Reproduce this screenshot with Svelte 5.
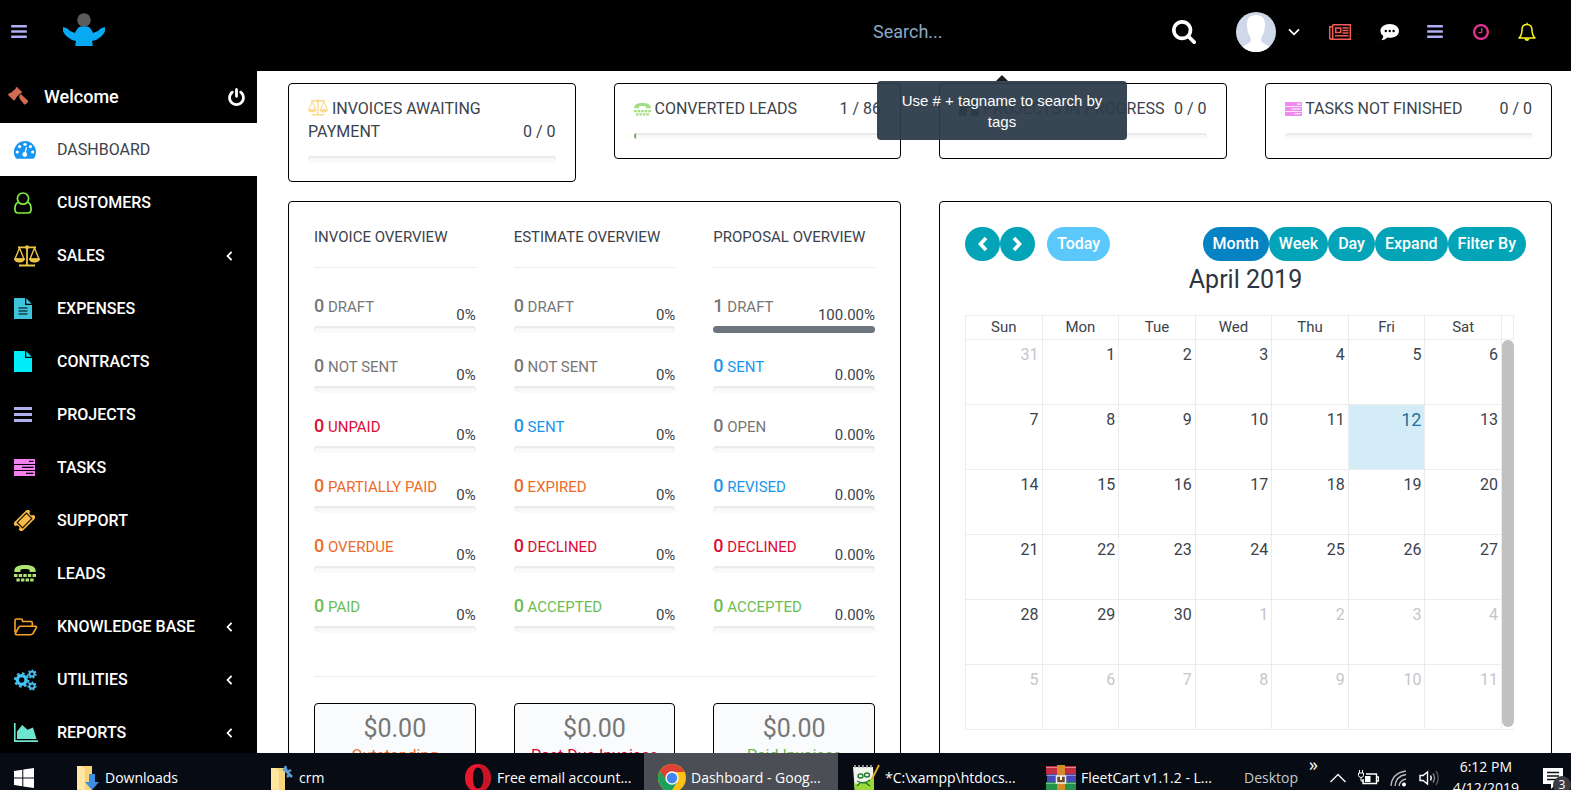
<script>
  const icons = {
    bars: { w: 18, h: 15, d: '<path d="M0 0h18v3H0zM0 6h18v3H0zM0 12h18v3H0z" fill="currentColor"/>' },
    gavel: { w: 20, h: 20, d: '<g fill="currentColor"><path d="M7.600.6 9 0l5 5-.6 1.400-.9-.2-4.800 4.800.3 1-1.400.7-5.600-5.600.7-1.400.9.2L7.800 1.600z"/><path d="m0 7 1.400-.4L7 12.200l-.4 1.400L5.200 13 .6 8.400z"/><path d="m11 9 2-2 1.600 1.700 5 4.600q1 1.200 0 2.200l-1.600 1.600q-1.200 1-2.200-.1l-4-5z"/></g>' },
    power: { w: 17, h: 18, vb: '128 0 1536 1664', d: '<path fill="currentColor" d="M1664 896q0 156-61 298t-164 245-245 164-298 61-298-61-245-164-164-245-61-298q0-182 80.500-343t226.500-270q43-32 95.500-25t83.500 50q32 42 24.500 94.500t-49.500 84.500q-98 74-151.500 181t-53.500 228q0 104 40.500 198.500t109.500 163.500 163.500 109.500 198.500 40.500 198.500-40.500 163.500-109.500 109.500-163.500 40.500-198.500q0-121-53.500-228t-151.500-181q-42-32-49.500-84.500t24.500-94.500q31-43 84-50t95 25q146 109 226.500 270t80.500 343zm-640-768v640q0 52-38 90t-90 38-90-38-38-90v-640q0-52 38-90t90-38 90 38 38 90z"/>' },
    search: { w: 24, h: 24, vb: '64 128 1664 1664', d: '<path fill="currentColor" d="M1216 832q0-185-131.500-316.500t-316.500-131.500-316.500 131.500-131.500 316.500 131.500 316.500 316.500 131.500 316.500-131.500 131.500-316.500zm512 832q0 52-38 90t-90 38q-54 0-90-38l-343-342q-179 124-399 124-143 0-273.500-55.500t-225-150-150-225-55.500-273.500 55.500-273.500 150-225 225-150 273.500-55.500 273.500 55.500 225 150 150 225 55.500 273.500q0 220-124 399l343 343q37 37 37 90z"/>' },
    clock: { w: 16, h: 16, vb: '128 128 1536 1536', d: '<path fill="currentColor" d="M1024 544v448q0 14-9 23t-23 9h-320q-14 0-23-9t-9-23v-64q0-14 9-23t23-9h224v-352q0-14 9-23t23-9h64q14 0 23 9t9 23zm416 352q0-148-73-273t-198-198-273-73-273 73-198 198-73 273 73 273 198 198 273 73 273-73 198-198 73-273zm224 0q0 209-103 385.500t-279.500 279.500-385.500 103-385.500-103-279.500-279.500-103-385.500 103-385.500 279.500-279.500 385.500-103 385.500 103 279.500 279.500 103 385.500z"/>' },
    dashboard: { w: 22, h: 18, d: '<path fill="currentColor" d="M11 0a11 11 0 0 1 11 11c0 2.300-.6 4.200-1.700 6q-.4.700-1.200.7H2.900q-.8 0-1.200-.7A11 11 0 0 1 11 0z"/><g fill="#fff"><circle cx="3.300" cy="11" r="1.600"/><circle cx="5.600" cy="5.600" r="1.600"/><circle cx="11" cy="3.300" r="1.600"/><circle cx="16.400" cy="5.600" r="1.600"/><circle cx="18.700" cy="11" r="1.600"/><path d="m12 6 1.200.3-1.300 5a2.400 2.400 0 1 1-1.300-.3z"/></g>' },
    user: { w: 18, h: 22, d: '<g fill="none" stroke="currentColor" stroke-width="1.700"><circle cx="9" cy="6.600" r="5.600"/><path d="M4.400 10.300C2 11 .9 13.400.9 17c0 2.300 1.200 4 3.300 4h9.600c2.100 0 3.300-1.700 3.300-4 0-3.600-1.100-6-3.500-6.700"/></g>' },
    scale: { w: 26, h: 22, d: '<g fill="none" stroke="currentColor"><path d="M4 2.300h18M13 2v18M5 20.500h16" stroke-width="1.800"/><path d="M5.500 3 1 14h9zM20.500 3 16 14h9z" stroke-width="1.400"/></g><g fill="currentColor"><path d="M0 13.500h11c0 2.500-2.500 4-5.500 4S0 16 0 13.500zM15 13.500h11c0 2.500-2.500 4-5.500 4s-5.500-1.500-5.500-4z"/><circle cx="13" cy="2.300" r="2"/></g>' },
    filetext: { w: 18, h: 21, d: '<path fill="currentColor" d="M0 0h11v7h7v14H0zM12.300.3 17.700 5.700h-5.400z"/><path d="M4.500 10h9M4.500 13h9M4.500 16h9" stroke="#000" stroke-width="1.200"/>' },
    file: { w: 18, h: 21, d: '<path fill="currentColor" d="M0 0h11v7h7v14H0zM12.300.3 17.700 5.700h-5.400z"/>' },
    tasks: { w: 21, h: 17, d: '<path fill="currentColor" fill-rule="evenodd" d="M0 0h21v5H0zM15 1.800v1.300h4.500V1.800zM0 6h21v5H0zM8 7.800v1.300h11.500V7.800zM0 12h21v5H0zM12 13.800v1.300h7.500v-1.300z"/>' },
    ticket: { w: 21, h: 21, d: '<g transform="rotate(-45 10.500 10.500)"><path fill="currentColor" d="M0 4.500h21v3.700a2.300 2.300 0 0 0 0 4.600v3.700H0v-3.700a2.300 2.300 0 0 0 0-4.600z"/><path d="M4 6.700h13v7.600H4z" fill="none" stroke="#241804" stroke-width="1.200"/></g>' },
    tty: { w: 22, h: 17, d: '<g fill="currentColor"><path d="M11 0c6 0 10.600 1.600 10.600 5.300V7h-6V5.200C15.600 4.400 13.600 4 11 4s-4.600.4-4.600 1.200V7h-6V5.300C.4 1.600 5 0 11 0z"/><path d="M0 9h3.500v3H0zM4.700 9h3.400v3H4.700zM9.300 9h3.400v3H9.300zM13.900 9h3.400v3h-3.400zM18.500 9H22v3h-3.500zM2.400 13.500h3.400v3H2.400zM7 13.500h3.400v3H7zM11.600 13.500H15v3h-3.400zM16.200 13.500h3.400v3h-3.400z"/></g>' },
    folder: { w: 24, h: 18, d: '<path fill="none" stroke="currentColor" stroke-width="1.600" stroke-linejoin="round" d="M1 14.500V2.500Q1 1 2.500 1H7q1.500 0 1.500 1.500v1H17q1.300 0 1.300 1.500v3.200M6.500 8.200h15q1.600 0 .8 1.400L19 15.500Q18 16.700 16.500 16.700h-14q-1.600 0-1-1.300l3-5.800q.9-1.400 2-1.400z"/>' },
    cogs: { w: 23, h: 22, d: '<g fill="none" stroke="currentColor"><circle cx="7.700" cy="11" r="4.400" stroke-width="3.400"/><circle cx="7.700" cy="11" r="6.700" stroke-width="2" stroke-dasharray="2.700 2.562"/><circle cx="18" cy="5" r="2.500" stroke-width="1.800"/><circle cx="18" cy="5" r="3.900" stroke-width="1.400" stroke-dasharray="1.700 1.800"/><circle cx="18" cy="17" r="2.500" stroke-width="1.800"/><circle cx="18" cy="17" r="3.900" stroke-width="1.400" stroke-dasharray="1.700 1.800"/></g>' },
    chart: { w: 24, h: 19, d: '<path fill="currentColor" d="M0 0h1.600v17.300H24V19H0zM3 16V8.500L8.200 2l5.300 4.700L19 4.400 22.500 16z"/>' },
    left: { w: 7, h: 10, d: '<path d="M5.600.8 1.600 5l4 4.200" fill="none" stroke="currentColor" stroke-width="1.800"/>' },
    down: { w: 12, h: 8, d: '<path d="m1 1.300 5 5 5-5" fill="none" stroke="currentColor" stroke-width="1.700"/>' },
    news: { w: 22, h: 16, d: '<g fill="none" stroke="currentColor" stroke-width="1.500"><path d="M3.700.7h17.600v14.600H2.500Q.7 15.300.7 13.500V2.700h3M3.700.7v12.800q0 1.800-1.200 1.800M6.700 4h5v4.500h-5zM13.500 4h6M13.500 6.500h6M13.500 9h6M6 11.700h13.500"/></g>' },
    comment: { w: 19, h: 18, d: '<path fill="currentColor" d="M9.700 1C15 1 19 4 19 7.900s-4 6.900-9.300 6.900q-1.200 0-2.200-.2Q5 17 1.300 17.300q2-1.700 2-4.200Q.4 11 .4 7.900C.4 4 4.500 1 9.700 1z"/><g fill="#000"><circle cx="5.800" cy="8" r="1.200"/><circle cx="9.700" cy="8" r="1.200"/><circle cx="13.600" cy="8" r="1.200"/></g>' },
    bell: { w: 18, h: 20, d: '<path fill="none" stroke="currentColor" stroke-width="1.500" stroke-linejoin="round" d="M9 2.500c-3.300 0-5 2.400-5 5.300 0 4.200-1 6.400-3 8.200h16c-2-1.800-3-4-3-8.200 0-2.900-1.700-5.300-5-5.300zM9 2.500V.8"/><path fill="currentColor" d="M6.500 16.500h5a2.500 2.500 0 0 1-5 0z"/>' },
    binoc: { w: 20, h: 16, d: '<path fill="currentColor" d="M4 0h4v3h4V0h4l4 10v6h-8V8H8v8H0v-6z"/>' },
    cleft: { w: 11, h: 16, d: '<path d="M9 2 3.500 8 9 14" fill="none" stroke="currentColor" stroke-width="3.600"/>' },
    cright: { w: 11, h: 16, d: '<path d="M2 2 7.500 8 2 14" fill="none" stroke="currentColor" stroke-width="3.600"/>' },
    logo: { w: 42, h: 33, d: '<circle cx="21" cy="7" r="6.800" fill="#5c5c5c"/><path fill="#06a9f2" d="M0 14q5 1 7 4l5 2q2-5 5-6.500h8q3 1.500 5 6.500l5-2q2-3 7-4v4q-2 5-6 7-3 3-7 3l1 6q-9 2-18 0l1-6q-4 0-7-3-4-2-6-7z"/>' },
    windows: { w: 20, h: 20, d: '<path fill="#fff" d="M0 3 8.300 1.800v7.700H0zM9.300 1.600 20 0v9.500H9.300zM0 10.500h8.300v7.700L0 17zM9.300 10.500H20V20L9.300 18.400z"/>' },
    downloads: { w: 24, h: 26, d: '<path fill="#f5d47c" d="M1 1h15v25H1z"/><path fill="#ffe7a0" d="M1 1h4l4 3v22l-3-1-5-1z"/><path fill="#3b8ee0" d="M13 9h6v8h4l-7 8-7-8h4z"/>' },
    crm: { w: 24, h: 26, d: '<path fill="#f5d47c" d="M1 3h14v23H1z"/><path fill="#ffe7a0" d="M1 3h4l4 3v20l-3-1-5-1z"/><path d="m13 4 4 3 4-2M15 1l2 6 5 5M20 9l-3 3" stroke="#5b9fd2" stroke-width="2.500" fill="none"/>' },
    opera: { w: 28, h: 28, d: '<path fill="#e8182c" fill-rule="evenodd" d="M14 0c8 0 13 6 13 14s-5 14-13 14S1 22 1 14 6 0 14 0zM14 3.500C10.500 3.500 9 8.500 9 14s1.500 10.500 5 10.500S19.500 19.500 19.500 14 17.500 3.500 14 3.500z"/><path d="M16 .2c7 .8 11 6.800 11 13.800s-4 13-11 13.800v-4q3.500-3 3.500-9.800T16 4.200z" fill="#a80f20" opacity=".5"/>' },
    chrome: { w: 28, h: 28, d: '<circle cx="14" cy="14" r="14" fill="#fbc116"/><path fill="#de4035" d="M1.900 7A14 14 0 0 1 26.100 7L27 8H14L8 17z"/><path fill="#1da05d" d="M1.900 7A14 14 0 0 0 13 28l6-10-10-1z"/><circle cx="14" cy="14" r="6.700" fill="#f4f4f4"/><circle cx="14" cy="14" r="5.200" fill="#4285ee"/>' },
    notepad: { w: 28, h: 28, d: '<path fill="#f1f5ee" d="M1 3h20l1 25H3z"/><path fill="#9ad83a" d="M2 19q10 3 20-7v16H3z"/><path d="M3 4V1M7 4V1M11 4V1M15 4V1M19 4V1" stroke="#bbb" stroke-width="1.500"/><g stroke="#247a28" stroke-width="1.400" fill="none"><ellipse cx="8.500" cy="12" rx="2.500" ry="2"/><ellipse cx="15" cy="11" rx="2.500" ry="2"/><path d="M5 17q7 4 13-1M8 19l-3 3M14 19l4 3"/></g><path d="m20 15 7-14" stroke="#dba62a" stroke-width="2"/>' },
    winrar: { w: 30, h: 28, d: '<path fill="#c22d40" d="M0 2h30v8H0z"/><path fill="#4649b8" d="M1 10h29v8H1z"/><path fill="#23924a" d="M0 18h30v8H0z"/><path d="M0 3.500h30M0 11.500h30M0 19.500h30" stroke="#fff" stroke-opacity=".4"/><path fill="#d68a2a" d="M11 1h8v26h-8z"/><path d="M10.500 12h9v7h-9z" fill="#6b4a24" stroke="#eee" stroke-width="1.500"/><path d="M15 12v4" stroke="#fff" stroke-width="2"/>' },
    up: { w: 18, h: 10, d: '<path d="m1.500 9 7.500-7.500L16.500 9" fill="none" stroke="#eee" stroke-width="1.500"/>' },
    battery: { w: 21, h: 16, d: '<path d="M8 4h10.500v9.500H5V9M19 7h1.500v4H19" fill="none" stroke="#fff" stroke-width="1.400"/><path fill="#fff" d="M7 6h5.500v6H7z"/><path d="M1.500 0v3M4.500 0v3M.5 3h5v2.500q-.5 2-2.500 2t-2.500-2zM3 8v3h3" stroke="#fff" fill="none"/>' },
    wifi: { w: 18, h: 17, d: '<g fill="none" stroke="#bbb" stroke-width="1.400"><path d="M1 16Q2 3 16 1"/><path d="M5 16q1-10 11-11.500" /><path d="M9 16q1-6 7-7"/></g><circle cx="14" cy="14.500" r="2" fill="#fff"/>' },
    sound: { w: 21, h: 16, d: '<path d="M1 5.500h3L8.500 2v12L4 10.500H1z" fill="none" stroke="#fff" stroke-width="1.400"/><g fill="none" stroke-width="1.400"><path d="M11.500 5.500q1.600 2.500 0 5" stroke="#fff"/><path d="M14 3.500q3 4.500 0 9" stroke="#888"/><path d="M17 1q4.500 7 0 14" stroke="#555"/></g>' },
    note: { w: 28, h: 28, d: '<path fill="#fff" d="M0 1h20v16h-7l-5 5v-5H0z"/><path d="M4 5.500h12M4 9h12M4 12.500h12" stroke="#0a0e16" stroke-width="1.400"/>' }
  };

  const menu = [
    ['DASHBOARD', 'dashboard', '#1996f3'],
    ['CUSTOMERS', 'user', '#7fef3c'],
    ['SALES', 'scale', '#edc546', true],
    ['EXPENSES', 'filetext', '#3fc3dd'],
    ['CONTRACTS', 'file', '#00ecf8'],
    ['PROJECTS', 'bars', '#b0aff2'],
    ['TASKS', 'tasks', '#f47ff0'],
    ['SUPPORT', 'ticket', '#f9bb48'],
    ['LEADS', 'tty', '#ade573'],
    ['KNOWLEDGE BASE', 'folder', '#f8a527', true],
    ['UTILITIES', 'cogs', '#46c3f5', true],
    ['REPORTS', 'chart', '#6de5cf', true]
  ];

  const tools = [
    ['News feed', 'news', '#f55b52'],
    ['Messages', 'comment', '#ffffff'],
    ['To do', 'bars', '#b0aff2'],
    ['Timers', 'clock', '#e1328e'],
    ['Notifications', 'bell', '#fdf51e']
  ];

  const cards = [
    ['INVOICES AWAITING PAYMENT', '0 / 0', 'scale', '#fbd98c', 0],
    ['CONVERTED LEADS', '1 / 86', 'tty', '#a5dd84', 1],
    ['PROJECTS IN PROGRESS', '0 / 0', 'binoc', '#333333', 0],
    ['TASKS NOT FINISHED', '0 / 0', 'tasks', '#ef8af0', 0]
  ];

  const grey = '#777777', blue = '#2196e8', red = '#dc0b38', orange = '#ee6a2a', green = '#6cbd54';
  const overviews = [
    { title: 'INVOICE OVERVIEW', pct: '0%', rows: [['DRAFT', grey], ['NOT SENT', grey], ['UNPAID', red], ['PARTIALLY PAID', orange], ['OVERDUE', orange], ['PAID', green]] },
    { title: 'ESTIMATE OVERVIEW', pct: '0%', rows: [['DRAFT', grey], ['NOT SENT', grey], ['SENT', blue], ['EXPIRED', orange], ['DECLINED', red], ['ACCEPTED', green]] },
    { title: 'PROPOSAL OVERVIEW', pct: '0.00%', rows: [['DRAFT', grey, 1], ['SENT', blue], ['OPEN', grey], ['REVISED', blue], ['DECLINED', red], ['ACCEPTED', green]] }
  ];
  const totals = [['Outstanding Invoices', orange], ['Past Due Invoices', red], ['Paid Invoices', green]];

  const days = ['Sun', 'Mon', 'Tue', 'Wed', 'Thu', 'Fri', 'Sat'];
  const weeks = Array.from({ length: 6 }, (_, w) =>
    Array.from({ length: 7 }, (_, d) => {
      const n = w * 7 + d;
      return { n: n === 0 ? 31 : n > 30 ? n - 30 : n, off: n === 0 || n > 30, today: n === 12 };
    })
  );

  const apps = [
    ['Downloads', 'downloads'],
    ['crm', 'crm'],
    ['Free email account...', 'opera'],
    ['Dashboard - Goog...', 'chrome', true],
    ['*C:\\xampp\\htdocs...', 'notepad'],
    ['FleetCart v1.1.2 - L...', 'winrar']
  ];
</script>

{#snippet icon(name, w = 0)}
  {@const i = icons[name]}
  <svg width={w || i.w} height={w ? Math.round((w * i.h) / i.w) : i.h} viewBox={i.vb ?? `0 0 ${i.w} ${i.h}`} aria-hidden="true">{@html i.d}</svg>
{/snippet}

<div class="screen">
  <div class="app">
    <header>
      <button class="burger" aria-label="Toggle menu">{@render icon('bars', 16)}</button>
      <a class="logo" href="#home" aria-label="Home">{@render icon('logo')}</a>
      <div class="search">
        <input type="search" placeholder="Search..." aria-label="Search" aria-describedby="search-tip" />
        <div class="tip" id="search-tip" role="tooltip">Use # + tagname to search by tags</div>
      </div>
      <button class="find" aria-label="Search">{@render icon('search')}</button>
      <div class="avatar">
        <svg width="40" height="40" viewBox="0 0 40 40" aria-hidden="true">
          <path fill="#fff" d="M20 3c7 0 9.500 4.500 9 11-.3 5-1.600 9-3.600 11.500v4c2 2.500 5.500 3 8 5.500v6H6.600v-6c2.500-2.500 6-3 8-5.500v-4c-2-2.500-3.300-6.500-3.600-11.500C10.500 7.500 13 3 20 3z" />
        </svg>
      </div>
      <button class="account" aria-label="Account">{@render icon('down')}</button>
      <nav class="tools" aria-label="Tools">
        {#each tools as [label, name, color]}
          <button aria-label={label} style:color>{@render icon(name, name === 'bars' ? 16 : 0)}</button>
        {/each}
      </nav>
    </header>

    <div class="body">
      <aside>
        <div class="welcome">
          <span class="gavel">{@render icon('gavel')}</span>
          <strong>Welcome</strong>
          <button aria-label="Log out">{@render icon('power')}</button>
        </div>
        <nav aria-label="Main">
          {#each menu as [label, name, color, sub], i}
            <a href="#{name}" class:active={i === 0}>
              <span class="mi" style:color>{@render icon(name)}</span>
              <span>{label}</span>
              {#if sub}<span class="sub">{@render icon('left')}</span>{/if}
            </a>
          {/each}
        </nav>
      </aside>

      <main>
        {#each cards as [label, value, name, color, pct]}
          <section class="card">
            <div class="cardhead">
              <span><span class="ci" style:color>{@render icon(name, name === 'scale' || name === 'binoc' ? 20 : 17)}</span> {label}</span>
              <span class="val">{value}</span>
            </div>
            <div class="bar thin"><div class="fill lead" style:width="{pct}%"></div></div>
          </section>
        {/each}

        <section class="panel">
          <div class="cols">
            {#each overviews as o}
              <div>
                <h2>{o.title}</h2>
                {#each o.rows as [label, color, full]}
                  <div class="stat">
                    <a href="#stat" style:color><b>{full ? 1 : 0}</b> {label}</a>
                    <span>{full ? '100.00%' : o.pct}</span>
                  </div>
                  <div class="bar"><div class="fill" style:width="{full ? 100 : 0}%"></div></div>
                {/each}
              </div>
            {/each}
          </div>
          <div class="cols totals">
            {#each totals as [label, color]}
              <div class="total"><p>$0.00</p><span style:color>{label}</span></div>
            {/each}
          </div>
        </section>

        <section class="panel">
          <div class="toolbar">
            <button class="round" aria-label="Previous">{@render icon('cleft')}</button>
            <button class="round" aria-label="Next">{@render icon('cright')}</button>
            <button class="today">Today</button>
            <span class="push"></span>
            <button class="on">Month</button>
            <button>Week</button>
            <button>Day</button>
            <button>Expand</button>
            <button>Filter By</button>
          </div>
          <h1>April 2019</h1>
          <table>
            <thead>
              <tr>
                {#each days as d}<th scope="col">{d}</th>{/each}
                <td class="gutter"></td>
              </tr>
            </thead>
            <tbody>
              {#each weeks as week, w}
                <tr>
                  {#each week as d}
                    <td class:off={d.off} class:now={d.today}>{d.n}</td>
                  {/each}
                  {#if w === 0}<td class="gutter track" rowspan="6"><div class="thumb"></div></td>{/if}
                </tr>
              {/each}
            </tbody>
          </table>
        </section>
      </main>
    </div>
  </div>

  <footer>
    <button class="start" aria-label="Start">{@render icon('windows')}</button>
    <div class="apps">
      {#each apps as [label, name, on]}
        <button class:on>{@render icon(name)}<span>{label}</span></button>
      {/each}
    </div>
    <div class="tray">
      <span class="desk">Desktop</span>
      <span class="more">»</span>
      {@render icon('up')}
      {@render icon('battery')}
      {@render icon('wifi')}
      {@render icon('sound')}
    </div>
    <div class="clock"><span>6:12 PM</span><span>4/12/2019</span></div>
    <div class="note">{@render icon('note')}<span>3</span></div>
  </footer>
</div>

<style>
  :global(body) { background: #fff; overflow: hidden; }
  * { box-sizing: border-box; }
  button { border: 0; padding: 0; background: none; color: inherit; font: inherit; cursor: pointer; }
  a { color: inherit; text-decoration: none; }
  svg { display: block; flex: none; }
  .screen { height: 100vh; display: flex; flex-direction: column; font: 16px/24px Roboto, sans-serif; color: #3b424c; }
  .app { flex: 1; min-height: 0; overflow: hidden; display: flex; flex-direction: column; }

  header { flex: none; height: 71px; padding: 0 21px 8px 11px; background: #000; display: flex; align-items: center; color: #fff; }
  .burger { color: #b0aff2; }
  .logo { margin-left: 36px; margin-top: -4px; }
  .search { position: relative; width: 324px; margin-left: auto; }
  .search input { width: 100%; height: 40px; border: 0; outline: 0; background: none; padding: 0 0 0 33px; font: 18px Roboto, sans-serif; color: #fff; }
  .search input::placeholder { color: #8aa9c4; opacity: 1; }
  .tip { position: absolute; z-index: 5; left: 37px; right: 37px; top: 69px; padding: 9px 16px 8px; border-radius: 4px; background: rgba(44, 60, 73, 0.95); color: #fff; font: 15px/21px "Liberation Sans", Arial, sans-serif; text-align: center; }
  .tip::before { content: ""; position: absolute; left: 50%; top: -6px; margin-left: -6px; border: 6px solid transparent; border-top: 0; border-bottom: 6px solid #1b1f24; }
  .find { width: 40px; height: 40px; display: grid; place-items: center; }
  .avatar { width: 40px; height: 40px; margin-left: 32px; border-radius: 50%; overflow: hidden; background: #cfd8e8; }
  .account { width: 24px; height: 40px; margin: 0 12px 0 6px; display: grid; place-items: center; }
  .tools { display: flex; }
  .tools button { width: 46px; height: 40px; display: grid; place-items: center; }
  .tools button:first-child { width: 48px; padding-right: 4px; }

  .body { flex: 1; min-height: 0; display: flex; }
  aside { flex: none; width: 257px; background: #000; color: #fff; }
  .welcome { height: 52px; display: flex; align-items: center; padding: 0 12px 0 8px; }
  .gavel { width: 36px; color: #d06b52; }
  .welcome strong { flex: 1; font-size: 18px; font-weight: 500; }
  aside nav a { display: flex; align-items: center; height: 53px; padding: 0 24px 0 14px; }
  aside nav a.active { background: #fff; color: #3b424c; }
  aside nav a:not(.active) { font-weight: 500; }
  .mi { width: 43px; }
  .sub { margin-left: auto; }

  main { flex: 1; min-width: 0; display: grid; grid-template-columns: repeat(4, minmax(0, 1fr)); grid-auto-rows: max-content; gap: 19px 38px; padding: 12px 19px 0 31px; }
  .card { align-self: start; padding: 13px 19px 19px; border: 1px solid #000; border-radius: 4px; }
  .cardhead { display: flex; justify-content: space-between; align-items: flex-end; line-height: 23px; gap: 4px; }
  .ci { display: inline-block; vertical-align: -2px; }
  .val { white-space: nowrap; }
  .bar { height: 7px; margin-bottom: 20px; border-radius: 4px; background: #f9f9fa; box-shadow: inset 0 2px 1px #e9e9eb; overflow: hidden; }
  .thin { height: 6px; margin: 13px 0 0; }
  .fill { height: 100%; background: #6d757f; }
  .lead { min-width: 0; background: #6cb04a; }

  .panel { grid-column: span 2; padding: 25px; border: 1px solid #000; border-radius: 4px; }
  .cols { display: grid; grid-template-columns: repeat(3, minmax(0, 1fr)); gap: 38px; }
  h2 { margin: 0 0 25px; padding-bottom: 20px; border-bottom: 1px solid #ececee; font-size: 15px; line-height: 20px; font-weight: 400; white-space: nowrap; }
  .stat { display: flex; justify-content: space-between; height: 33px; white-space: nowrap; font-size: 15px; }
  .stat a { line-height: 26px; }
  .stat b { font-size: 18px; font-weight: 500; }
  .stat span { align-self: flex-end; line-height: 22px; }
  .totals { margin-top: 23px; padding-top: 26px; border-top: 1px solid #ececee; }
  .total { padding: 10px; border: 1px solid #000; border-radius: 4px; background: #fafbfd; text-align: center; }
  .total p { margin: 0; font-size: 25px; line-height: 30px; color: #777; }

  .toolbar { display: flex; height: 34px; }
  .toolbar button { padding: 0 10px; border-radius: 17px; background: #03a4b8; color: #fff; font-weight: 500; }
  .toolbar .round { width: 35px; padding: 0; display: grid; place-items: center; }
  .toolbar .today { margin-left: 12px; background: #5bc8fb; }
  .toolbar .on { background: #0683c3; }
  .push { flex: 1; }
  h1 { margin: 0 0 17px; font-size: 25px; line-height: 37px; font-weight: 400; text-align: center; color: #2d353f; }
  table { width: calc(100% - 12px); table-layout: fixed; border-collapse: collapse; }
  th, td { border: 1px solid #ececee; padding: 0; }
  th { height: 24px; font-weight: 400; font-size: 15px; line-height: 23px; }
  td { height: 65px; padding: 4px 3px 0 0; text-align: right; vertical-align: top; line-height: 22px; }
  td.off { color: #c4c6c9; }
  td.now { background: #d4ecf7; color: #1f7396; font-size: 18px; }
  td.gutter { width: 12px; height: 24px; padding: 0; }
  td.track { border-width: 0 0 1px; }
  .thumb { height: 387px; border-radius: 6px; background: #c1c1c1; }

  footer { flex: none; height: 37px; overflow: hidden; display: flex; align-items: flex-start; background: #070b13; color: #fff; font: 14px/20px "Open Sans", "Segoe UI", sans-serif; }
  footer button, .tray { height: 50px; display: flex; align-items: center; }
  .start { width: 62px; padding-left: 14px; }
  .apps { flex: 0 1 1164px; display: grid; grid-template-columns: repeat(6, minmax(0, 1fr)); }
  .apps button { padding-left: 14px; gap: 5px; white-space: nowrap; }
  .apps .on { background: #4b4e54; }
  .tray { gap: 11px; padding-left: 18px; white-space: nowrap; }
  .desk { color: #c8cacc; }
  .more { align-self: flex-start; font-size: 18px; line-height: 22px; }
  .clock { margin-left: auto; display: flex; flex-direction: column; align-items: center; padding: 3px 24px 0 0; }
  .clock span { line-height: 21px; }
  .note { position: relative; width: 28px; padding-top: 14px; }
  .note span { position: absolute; left: 10px; top: 23px; width: 18px; height: 18px; border-radius: 50%; background: #3a3d42; font-size: 12px; line-height: 18px; text-align: center; }
</style>
